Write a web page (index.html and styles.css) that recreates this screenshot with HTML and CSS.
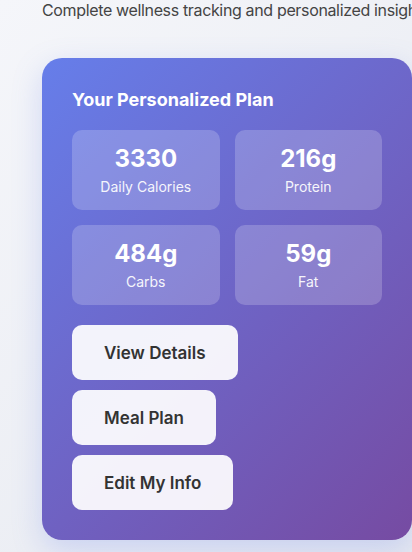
FILE: index.html
```html
<!DOCTYPE html>
<html>
<head>
<meta charset="utf-8">
<link rel="stylesheet" href="styles.css">
</head>
<body>
<div class="page">
  <p class="subtitle">Complete wellness tracking and personalized insights for your health journey</p>
  <section class="plan-card">
    <h2 class="plan-title">Your Personalized Plan</h2>
    <div class="stats">
      <div class="stat"><div class="stat-value">3330</div><div class="stat-label">Daily Calories</div></div>
      <div class="stat"><div class="stat-value">216g</div><div class="stat-label">Protein</div></div>
      <div class="stat"><div class="stat-value">484g</div><div class="stat-label">Carbs</div></div>
      <div class="stat"><div class="stat-value">59g</div><div class="stat-label">Fat</div></div>
    </div>
    <div class="actions">
      <button class="btn">View Details</button>
      <button class="btn">Meal Plan</button>
      <button class="btn">Edit My Info</button>
    </div>
  </section>
</div>
</body>
</html>
```
FILE: styles.css
```css
html, body {
  margin: 0;
  padding: 0;
  overflow: hidden;
}
body {
  width: 412px;
  height: 552px;
  background: linear-gradient(135deg, #f5f6fa 0%, #e6e9f0 100%);
  font-family: Inter, "Noto Sans", sans-serif;
}
.page {
  padding-left: 42px;
}
.subtitle {
  margin: 0;
  font-size: 16px;
  letter-spacing: -0.35px;
  line-height: 20px;
  color: #444;
  white-space: nowrap;
}
.plan-card {
  margin-top: 38px;
  width: 370px;
  box-sizing: border-box;
  padding: 30px;
  border-radius: 20px;
  background: linear-gradient(135deg, #667eea 0%, #764ba2 100%);
  box-shadow: 0 10px 30px rgba(102, 126, 234, 0.25);
  color: #fff;
}
.plan-title {
  margin: 0 0 18px;
  font-size: 18px;
  line-height: 24px;
  font-weight: 700;
}
.stats {
  display: grid;
  grid-template-columns: 1fr 1fr;
  gap: 15px;
}
.stat {
  height: 80px;
  box-sizing: border-box;
  border-radius: 10px;
  background: rgba(255, 255, 255, 0.2);
  display: flex;
  flex-direction: column;
  align-items: center;
  justify-content: center;
}
.stat-value {
  font-size: 24px;
  line-height: 30px;
  font-weight: 700;
}
.stat-label {
  margin-top: 4px;
  font-size: 14px;
  line-height: 18px;
  opacity: 0.92;
}
.actions {
  margin-top: 20px;
  display: flex;
  flex-direction: column;
  align-items: flex-start;
  gap: 10px;
}
.btn {
  height: 55px;
  padding: 0 32px;
  border: none;
  border-radius: 10px;
  background: rgba(255, 255, 255, 0.92);
  color: #333;
  font-family: Inter, "Noto Sans", sans-serif;
  font-size: 17px;
  font-weight: 600;
}
```
